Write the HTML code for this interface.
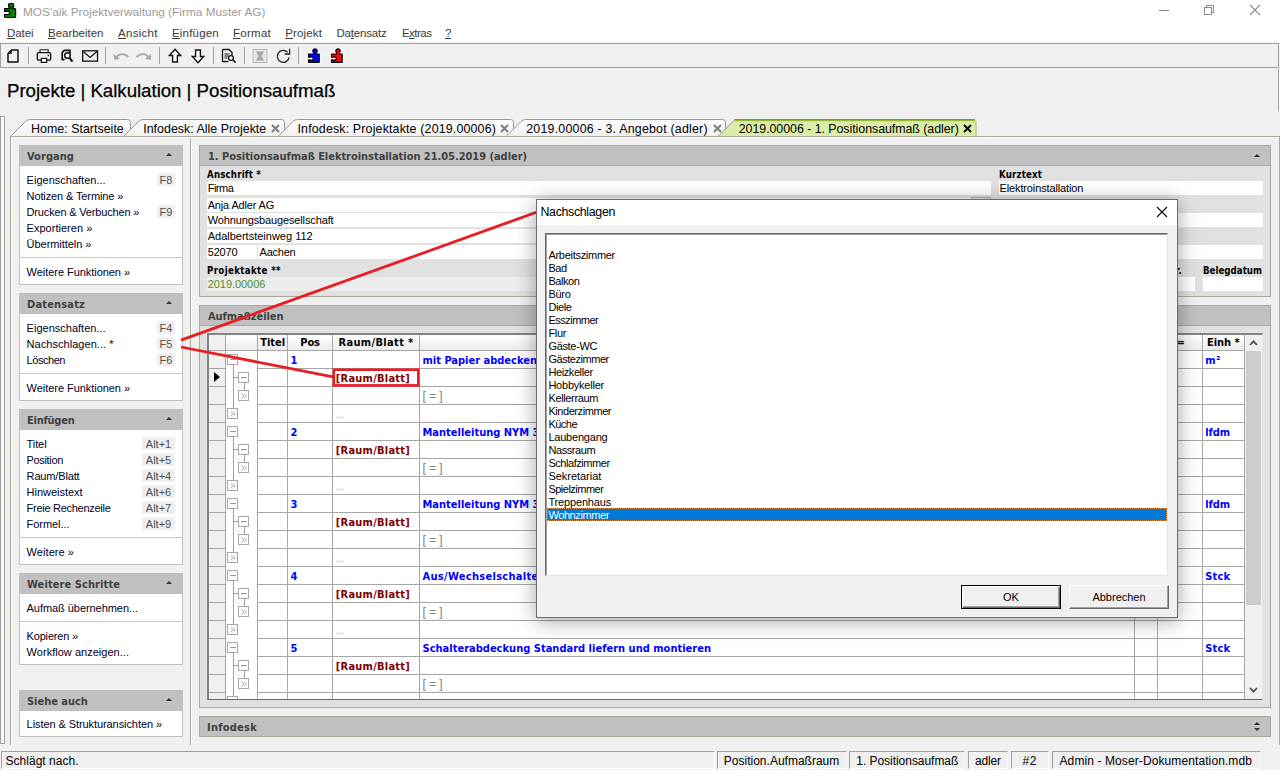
<!DOCTYPE html>
<html lang="de"><head><meta charset="utf-8"><title>MOS'aik Projektverwaltung</title>
<style>
html,body{margin:0;padding:0}
body{width:1280px;height:770px;overflow:hidden;background:#f0f0f0;position:relative;font-family:"Liberation Sans",sans-serif;font-size:11px;color:#000;}
div,span{box-sizing:border-box}
.abs{position:absolute}
.t{position:absolute;white-space:pre;line-height:14px;height:14px}
.ui{position:absolute;white-space:pre;line-height:14px;height:14px;font-family:"Liberation Sans",sans-serif;font-size:11.8px}
.menu{position:absolute;height:14px;line-height:14px;font-size:11.5px;color:#3a3a3a;white-space:pre}
.menu u{text-decoration:underline;text-underline-offset:1px}
.sep{position:absolute;top:47px;width:1px;height:17px;background:#a0a0a0}
.ph{position:absolute;height:21px;background:#c0c0c0}
.pt{position:absolute;height:14px;line-height:14px;color:#404040;font-family:"DejaVu Sans Condensed","Liberation Sans",sans-serif;font-weight:bold;font-size:11px;white-space:pre}
.pb{position:absolute;background:#fff;border:1px solid #c0c0c0;border-top:none}
.arr{position:absolute;width:0;height:0;border-left:3px solid transparent;border-right:3px solid transparent;border-bottom:3px solid #303030}
.li{position:absolute;height:14px;line-height:14px;color:#00001c;white-space:pre}
.key{position:absolute;height:13px;line-height:14px;background:#efefef;color:#505050;text-align:center;white-space:pre}
.hr{position:absolute;left:20px;width:162px;height:1px;background:#c8c8c8}
.fld{position:absolute;height:14px;background:#fff;line-height:14px;white-space:pre;overflow:hidden}
.lbl{position:absolute;height:14px;line-height:14px;white-space:pre;font-size:9.6px;font-family:"DejaVu Sans Condensed","Liberation Sans",sans-serif;font-weight:bold}
.tab{position:absolute;height:14px;line-height:14px;font-size:12.4px;white-space:pre;color:#000}
.gl{position:absolute;background:#a6a6a6}
.gc{position:absolute;height:14px;line-height:14px;white-space:pre;font-family:"DejaVu Sans Condensed","Liberation Sans",sans-serif;font-weight:bold}
.blue{color:#0000ff}
.box{position:absolute;width:11px;height:11px;border:1px solid #a8a8a8;background:#fff}
.lb{position:absolute;height:13px;line-height:13px;white-space:pre}
.sp{position:absolute;top:751px;height:18px;border:1px solid;border-color:#a0a0a0 #fff #fff #a0a0a0}
.st{position:absolute;height:14px;line-height:14px;font-size:12px;white-space:pre}
</style></head>
<body>
<div class="abs" style="left:0;top:0;width:1280px;height:42px;background:#fff"></div>
<svg class="abs" style="left:0px;top:0px" width="20" height="20" viewBox="0 0 20 20"><path d="M4.600 8.600H9.900V7.100H8.600V4.500q0-1 1-1H12.600q1 0 1 1V7.100H12.300V8.600H14.600q1 0 1 1V16.500q0 1-1 1H5.600q-1 0-1-1V14.500H9.400V11.400H4.600V9.600z" fill="#008000" stroke="#000" stroke-width="1.200" stroke-linejoin="round"/></svg>
<div class="ui" style="left:23px;top:5px;letter-spacing:0.023px;color:#9a9a9a">MOS'aik Projektverwaltung (Firma Muster AG)</div>
<div class="abs" style="left:1159px;top:10px;width:10px;height:1px;background:#8a8a8a"></div>
<div class="abs" style="left:1206px;top:5px;width:8px;height:8px;border:1px solid #8a8a8a"></div>
<div class="abs" style="left:1204px;top:7px;width:8px;height:8px;border:1px solid #8a8a8a;background:#fff"></div>
<svg class="abs" style="left:1249px;top:4px" width="12" height="12" viewBox="0 0 12 12"><path d="M1 1L11 11M11 1L1 11" stroke="#8a8a8a" stroke-width="1.100" fill="none"/></svg>
<div class="menu" style="left:7px;top:26px;letter-spacing:-0.052px;"><u>D</u>atei</div>
<div class="menu" style="left:48px;top:26px;letter-spacing:-0.024px;"><u>B</u>earbeiten</div>
<div class="menu" style="left:118px;top:26px;letter-spacing:0.297px;"><u>A</u>nsicht</div>
<div class="menu" style="left:172px;top:26px;letter-spacing:0.187px;"><u>E</u>infügen</div>
<div class="menu" style="left:233px;top:26px;letter-spacing:0.26px;"><u>F</u>ormat</div>
<div class="menu" style="left:285.3px;top:26px;letter-spacing:0.129px;"><u>P</u>rojekt</div>
<div class="menu" style="left:336.4px;top:26px;letter-spacing:-0.177px;">Da<u>t</u>ensatz</div>
<div class="menu" style="left:401.9px;top:26px;letter-spacing:-0.5px;">E<u>x</u>tras</div>
<div class="menu" style="left:445px;top:26px;letter-spacing:-0.5px;"><u>?</u></div>
<div class="abs" style="left:0;top:43px;width:1279px;height:25px;border:1px solid #a0a0a0;background:#f0f0f0"></div>
<div class="sep" style="left:28px"></div>
<div class="sep" style="left:105px"></div>
<div class="sep" style="left:159px"></div>
<div class="sep" style="left:213px"></div>
<div class="sep" style="left:244px"></div>
<div class="sep" style="left:298px"></div>
<svg class="abs" style="left:6px;top:48px" width="14" height="16" viewBox="0 0 14 16"><path d="M5.500 2h6.500v12h-10v-8.500z" fill="none" stroke="#111" stroke-width="1.500" stroke-linejoin="round"/><path d="M2.300 5.800h3.500v-3.500z" fill="#111"/></svg>
<svg class="abs" style="left:36px;top:48px" width="16" height="16" viewBox="0 0 16 16"><path d="M4 4.600V1.700h8.200v2.900" fill="none" stroke="#222" stroke-width="1.100"/><path d="M5 12.200H2.600q-1.300 0-1.300-1.300V6q0-1.300 1.300-1.300h10.800q1.300 0 1.300 1.300v4.900q0 1.300-1.300 1.300H11" fill="none" stroke="#111" stroke-width="1.300"/><rect x="5.300" y="10.400" width="5.400" height="4" fill="#f6f6f6" stroke="#111" stroke-width="1.200"/><rect x="11.600" y="6.700" width="1.500" height="1.500" fill="#111"/></svg>
<svg class="abs" style="left:60px;top:48px" width="14" height="16" viewBox="0 0 14 16"><path d="M10 5.500V2.300H4.300L2.200 4.400V11.600H4.500" fill="none" stroke="#111" stroke-width="1.700" stroke-linejoin="round"/><circle cx="7.500" cy="7.500" r="2.800" fill="#fff" stroke="#111" stroke-width="1.500"/><path d="M9.500 9.800l3 3.800" stroke="#111" stroke-width="2"/></svg>
<svg class="abs" style="left:82px;top:50px" width="17" height="12" viewBox="0 0 17 12"><rect x=".7" y=".8" width="14.800" height="10.300" fill="none" stroke="#111" stroke-width="1.300"/><path d="M1 1.200l7.100 6.200 7.100-6.200" fill="none" stroke="#111" stroke-width="1.200"/></svg>
<svg class="abs" style="left:112px;top:50px" width="18" height="12" viewBox="0 0 18 12"><path d="M3.500 8.500C6 3.500 12 2.500 16.500 7" fill="none" stroke="#a8a8a8" stroke-width="1.800"/><path d="M1.500 4l1 6 5.500-1.200z" fill="#a8a8a8"/></svg>
<svg class="abs" style="left:135px;top:50px" width="18" height="12" viewBox="0 0 18 12"><path d="M14.500 8.500C12 3.500 6 2.500 1.500 7" fill="none" stroke="#a8a8a8" stroke-width="1.800"/><path d="M16.500 4l-1 6-5.500-1.200z" fill="#a8a8a8"/></svg>
<svg class="abs" style="left:168px;top:48px" width="14" height="16" viewBox="0 0 14 16"><path d="M7 1.200l5.600 6.300h-3.200v6.500h-4.800v-6.500h-3.200z" fill="#fff" stroke="#111" stroke-width="1.400" stroke-linejoin="miter"/></svg>
<svg class="abs" style="left:191px;top:48px" width="14" height="16" viewBox="0 0 14 16"><path d="M7 14.800l5.600-6.300h-3.200v-6.500h-4.800v6.500h-3.200z" fill="#fff" stroke="#111" stroke-width="1.400" stroke-linejoin="miter"/></svg>
<svg class="abs" style="left:221px;top:48px" width="16" height="16" viewBox="0 0 16 16"><path d="M1.500 1.500h6.500l3 3v3M1.500 1.500v12h6" fill="none" stroke="#111" stroke-width="1.300"/><path d="M3.500 6h5M3.500 8h4M3.500 10h3" stroke="#111" stroke-width="1"/><circle cx="10" cy="10" r="2.400" fill="#fff" stroke="#111" stroke-width="1.300"/><path d="M11.800 11.800l2.800 2.800" stroke="#111" stroke-width="1.600"/></svg>
<svg class="abs" style="left:252px;top:48px" width="16" height="16" viewBox="0 0 16 16"><rect x="1" y="1.500" width="14" height="13" fill="#e4e4e4" stroke="#b8b8b8" stroke-width="1"/><path d="M4 3.500h8l-2.500 4.500 2.500 4.500h-8l2.500-4.500z" fill="#a8a8a8"/></svg>
<svg class="abs" style="left:275px;top:48px" width="16" height="16" viewBox="0 0 16 16"><path d="M14.200 9.300A6 6 0 1 1 12.600 4.200" fill="none" stroke="#222" stroke-width="1.300"/><path d="M14.600 .8v5.200h-5" fill="none" stroke="#222" stroke-width="1.300"/></svg>
<svg class="abs" style="left:307px;top:48px" width="14" height="16" viewBox="0 0 14 16"><path d="M1.5 6H6.5V4.61A2.2 2.2 0 1 1 9.5 4.61V6H12.2V14.3H1.5V11.97H3.5999999999999996A1.7 1.7 0 1 0 3.5999999999999996 9.23H1.5Z" fill="#fff" stroke="#fff" stroke-width="3" stroke-linejoin="round"/><path d="M1.5 6H6.5V4.61A2.2 2.2 0 1 1 9.5 4.61V6H12.2V14.3H1.5V11.97H3.5999999999999996A1.7 1.7 0 1 0 3.5999999999999996 9.23H1.5Z" fill="#0000ff" stroke="#000" stroke-width="1.2" stroke-linejoin="round"/></svg>
<svg class="abs" style="left:330px;top:48px" width="14" height="16" viewBox="0 0 14 16"><path d="M1.5 6H6.5V4.61A2.2 2.2 0 1 1 9.5 4.61V6H12.2V14.3H1.5V11.97H3.5999999999999996A1.7 1.7 0 1 0 3.5999999999999996 9.23H1.5Z" fill="#fff" stroke="#fff" stroke-width="3" stroke-linejoin="round"/><path d="M1.5 6H6.5V4.61A2.2 2.2 0 1 1 9.5 4.61V6H12.2V14.3H1.5V11.97H3.5999999999999996A1.7 1.7 0 1 0 3.5999999999999996 9.23H1.5Z" fill="#ff0000" stroke="#000" stroke-width="1.2" stroke-linejoin="round"/></svg>
<div class="t" style="left:7px;top:79px;letter-spacing:-0.034px;height:24px;line-height:24px;font-size:18.7px;color:#000;-webkit-text-stroke:.25px #000">Projekte | Kalkulation | Positionsaufmaß</div>
<div class="abs" style="left:1278px;top:69px;width:1px;height:42px;background:#a0a0a0"></div><div class="abs" style="left:1279px;top:69px;width:1px;height:42px;background:#fff"></div>
<div class="abs" style="left:0;top:116px;width:5px;height:628px;background:#fafafa;border:1px solid #a0a0a0"></div>
<div class="abs" style="left:10px;top:136px;width:1270px;height:609px;border-left:1px solid #aca899;border-top:1px solid #aca899;border-right:1px solid #aca899"></div>
<div class="abs" style="left:11px;top:137px;width:1267px;height:608px;border-left:1px solid #fff;border-top:1px solid #fff"></div>
<div class="abs" style="left:190px;top:138px;width:1px;height:607px;background:#aca899"></div><div class="abs" style="left:191px;top:138px;width:1px;height:607px;background:#fff"></div>
<svg class="abs" style="left:0px;top:119px" width="1280" height="19" viewBox="0 0 1280 19"><defs><linearGradient id="tg" x1="0" y1="0" x2="0" y2="1"><stop offset="0" stop-color="#fdfdfd"/><stop offset="1" stop-color="#f1f1f1"/></linearGradient></defs><path d="M11 17L25.3 2.700Q27.5 .5 30 .5H127.5q3 0 3 3V17" fill="url(#tg)" stroke="#989890" stroke-width="1"/><path d="M124 17L138.3 2.700Q140.5 .5 143 .5H281.5q3 0 3 3V17" fill="url(#tg)" stroke="#989890" stroke-width="1"/><path d="M278.5 17L292.8 2.700Q295.0 .5 297.5 .5H510.5q3 0 3 3V17" fill="url(#tg)" stroke="#989890" stroke-width="1"/><path d="M506.5 17L520.8 2.700Q523.0 .5 525.5 .5H722.5q3 0 3 3V17" fill="url(#tg)" stroke="#989890" stroke-width="1"/><path d="M718.5 17L735.0 .5H974.5l2 2V17z" fill="#dcedaa"/><path d="M733.0 2.500L735.0 .5H974.5l2 2z" fill="#b9d95c"/><path d="M734.0 1L735.0 0H974.5l1 1z" fill="#6fa00c"/><path d="M734.5 .8H975.0" stroke="#6fa00c" stroke-width="1.600"/><path d="M718.5 17L734.0 1.500" stroke="#8c8c84" stroke-width=".9" fill="none"/><path d="M976.0 2.500V17" stroke="#a8b890" stroke-width="1" fill="none"/></svg>
<div class="tab" style="left:31px;top:122px;letter-spacing:0.032px;">Home: Startseite</div>
<div class="tab" style="left:143.25px;top:122px;letter-spacing:0.017px;">Infodesk: Alle Projekte</div>
<svg class="abs" style="left:271px;top:124px" width="9" height="9" viewBox="0 0 9 9"><path d="M1 1l7 7M8 1l-7 7" stroke="#808080" stroke-width="2" fill="none"/></svg>
<div class="tab" style="left:297.5px;top:122px;letter-spacing:0.165px;">Infodesk: Projektakte (2019.00006)</div>
<svg class="abs" style="left:500px;top:124px" width="9" height="9" viewBox="0 0 9 9"><path d="M1 1l7 7M8 1l-7 7" stroke="#808080" stroke-width="2" fill="none"/></svg>
<div class="tab" style="left:526.25px;top:122px;letter-spacing:0.212px;">2019.00006 - 3. Angebot (adler)</div>
<svg class="abs" style="left:712.5px;top:124px" width="9" height="9" viewBox="0 0 9 9"><path d="M1 1l7 7M8 1l-7 7" stroke="#808080" stroke-width="2" fill="none"/></svg>
<div class="tab" style="left:738.75px;top:122px;letter-spacing:-0.046px;">2019.00006 - 1. Positionsaufmaß (adler)</div>
<svg class="abs" style="left:963px;top:124px" width="9" height="9" viewBox="0 0 9 9"><path d="M1 1l7 7M8 1l-7 7" stroke="#111" stroke-width="2" fill="none"/></svg>
<div class="ph" style="left:19px;top:145px;width:164px"></div>
<div class="pt" style="left:27px;top:150px;letter-spacing:0.051px;">Vorgang</div>
<div class="arr" style="left:166px;top:153px"></div>
<div class="pb" style="left:19px;top:166px;width:164px;height:119px"></div>
<div class="li" style="left:26.6px;top:173px;letter-spacing:0.007px;">Eigenschaften...</div>
<div class="key" style="left:157px;top:173px;width:18px">F8</div>
<div class="li" style="left:26.6px;top:189px;letter-spacing:-0.119px;">Notizen &amp; Termine »</div>
<div class="li" style="left:26.6px;top:205px;letter-spacing:-0.171px;">Drucken &amp; Verbuchen »</div>
<div class="key" style="left:157px;top:205px;width:18px">F9</div>
<div class="li" style="left:26.6px;top:221px;letter-spacing:0.02px;">Exportieren »</div>
<div class="li" style="left:26.6px;top:237px;letter-spacing:-0.048px;">Übermitteln »</div>
<div class="hr" style="top:257px"></div>
<div class="li" style="left:26.6px;top:265px;letter-spacing:-0.048px;">Weitere Funktionen »</div>
<div class="ph" style="left:19px;top:293px;width:164px"></div>
<div class="pt" style="left:27px;top:298px;letter-spacing:0.172px;">Datensatz</div>
<div class="arr" style="left:166px;top:301px"></div>
<div class="pb" style="left:19px;top:314px;width:164px;height:87px"></div>
<div class="li" style="left:26.6px;top:321px;letter-spacing:0.007px;">Eigenschaften...</div>
<div class="key" style="left:157px;top:321px;width:18px">F4</div>
<div class="li" style="left:26.6px;top:337px;letter-spacing:0.04px;">Nachschlagen... *</div>
<div class="key" style="left:157px;top:337px;width:18px">F5</div>
<div class="li" style="left:26.6px;top:353px;letter-spacing:-0.456px;">Löschen</div>
<div class="key" style="left:157px;top:353px;width:18px">F6</div>
<div class="hr" style="top:373px"></div>
<div class="li" style="left:26.6px;top:381px;letter-spacing:-0.048px;">Weitere Funktionen »</div>
<div class="ph" style="left:19px;top:409px;width:164px"></div>
<div class="pt" style="left:27px;top:414px;letter-spacing:-0.238px;">Einfügen</div>
<div class="arr" style="left:166px;top:417px"></div>
<div class="pb" style="left:19px;top:430px;width:164px;height:135px"></div>
<div class="li" style="left:26.6px;top:437px;letter-spacing:-0.095px;">Titel</div>
<div class="key" style="left:142px;top:437px;width:33px">Alt+1</div>
<div class="li" style="left:26.6px;top:453px;letter-spacing:-0.343px;">Position</div>
<div class="key" style="left:142px;top:453px;width:33px">Alt+5</div>
<div class="li" style="left:26.6px;top:469px;letter-spacing:-0.152px;">Raum/Blatt</div>
<div class="key" style="left:142px;top:469px;width:33px">Alt+4</div>
<div class="li" style="left:26.6px;top:485px;letter-spacing:-0.032px;">Hinweistext</div>
<div class="key" style="left:142px;top:485px;width:33px">Alt+6</div>
<div class="li" style="left:26.6px;top:501px;letter-spacing:-0.28px;">Freie Rechenzeile</div>
<div class="key" style="left:142px;top:501px;width:33px">Alt+7</div>
<div class="li" style="left:26.6px;top:517px;letter-spacing:-0.056px;">Formel...</div>
<div class="key" style="left:142px;top:517px;width:33px">Alt+9</div>
<div class="hr" style="top:537px"></div>
<div class="li" style="left:26.6px;top:545px;letter-spacing:0.058px;">Weitere »</div>
<div class="ph" style="left:19px;top:573px;width:164px"></div>
<div class="pt" style="left:27px;top:578px;letter-spacing:0.087px;">Weitere Schritte</div>
<div class="arr" style="left:166px;top:581px"></div>
<div class="pb" style="left:19px;top:594px;width:164px;height:71px"></div>
<div class="li" style="left:26.6px;top:601px;letter-spacing:-0.056px;">Aufmaß übernehmen...</div>
<div class="hr" style="top:621px"></div>
<div class="li" style="left:26.6px;top:629px;letter-spacing:-0.182px;">Kopieren »</div>
<div class="li" style="left:26.6px;top:645px;letter-spacing:0.025px;">Workflow anzeigen...</div>
<div class="ph" style="left:19px;top:690px;width:164px"></div>
<div class="pt" style="left:27px;top:695px;letter-spacing:-0.028px;">Siehe auch</div>
<div class="arr" style="left:166px;top:698px"></div>
<div class="pb" style="left:19px;top:711px;width:164px;height:26px"></div>
<div class="li" style="left:26.6px;top:717px;letter-spacing:-0.078px;">Listen &amp; Strukturansichten »</div>
<div class="abs" style="left:199px;top:145px;width:1072px;height:152px;background:#e1e1e1;border:1px solid #aca899"></div>
<div class="ph" style="left:200px;top:146px;width:1070px;height:20px;border-bottom:1px solid #aca899"></div>
<div class="pt" style="left:208px;top:150px;letter-spacing:-0.038px;">1. Positionsaufmaß Elektroinstallation 21.05.2019 (adler)</div>
<div class="arr" style="left:1254px;top:154px"></div>
<div class="lbl" style="left:207px;top:168px;letter-spacing:0.196px;">Anschrift *</div>
<div class="fld" style="left:207px;top:181px;width:784px"></div>
<div class="t" style="left:207.7px;top:181px;letter-spacing:-0.5px;">Firma</div>
<div class="fld" style="left:207px;top:198px;width:784px"></div>
<div class="t" style="left:207.7px;top:198px;letter-spacing:-0.154px;">Anja Adler AG</div>
<div class="fld" style="left:207px;top:213px;width:784px"></div>
<div class="t" style="left:207.7px;top:213px;letter-spacing:-0.132px;">Wohnungsbaugesellschaft</div>
<div class="fld" style="left:207px;top:229px;width:784px"></div>
<div class="t" style="left:207.7px;top:229px;letter-spacing:0.001px;">Adalbertsteinweg 112</div>
<div class="fld" style="left:207px;top:245px;width:50px"></div>
<div class="t" style="left:207.7px;top:245px;letter-spacing:-0.179px;">52070</div>
<div class="fld" style="left:258px;top:245px;width:733px"></div>
<div class="t" style="left:259.6px;top:245px;letter-spacing:-0.252px;">Aachen</div>
<div class="abs" style="left:971px;top:197px;width:20px;height:16px;background:#e4e4e4;border:1px solid #b0b0b0"></div>
<div class="lbl" style="left:207px;top:264px;letter-spacing:0.374px;">Projektakte **</div>
<div class="fld" style="left:207px;top:277px;width:784px;background:#ececec"></div>
<div class="t" style="left:207.7px;top:277px;letter-spacing:-0.052px;color:#4f8f1f">2019.00006</div>
<div class="lbl" style="left:999px;top:168px;letter-spacing:0.172px;">Kurztext</div>
<div class="fld" style="left:999px;top:181px;width:264px"></div>
<div class="t" style="left:999.5px;top:181px;letter-spacing:-0.13px;">Elektroinstallation</div>
<div class="fld" style="left:999px;top:213px;width:264px"></div>
<div class="fld" style="left:999px;top:245px;width:264px"></div>
<div class="lbl" style="left:1141px;top:264px;letter-spacing:0.156px;">Belegnr.</div>
<div class="fld" style="left:1100px;top:277px;width:95px"></div>
<div class="lbl" style="left:1203px;top:264px;letter-spacing:0.03px;">Belegdatum</div>
<div class="fld" style="left:1203px;top:277px;width:60px"></div>
<div class="abs" style="left:199px;top:305px;width:1072px;height:403px;background:#e1e1e1;border:1px solid #aca899"></div>
<div class="ph" style="left:200px;top:306px;width:1070px;height:20px;border-bottom:1px solid #aca899"></div>
<div class="pt" style="left:208px;top:310px;letter-spacing:-0.052px;">Aufmaßzeilen</div>
<div class="abs" style="left:207px;top:333px;width:1056px;height:367px;background:#fff;border:2px solid;border-color:#848484 #e8e8e8 #696969 #848484;border-right-width:1px;border-bottom-width:1px"></div>
<div class="abs" style="left:209px;top:335px;width:1035px;height:15px;background:linear-gradient(#fff,#ececec)"></div>
<div class="abs" style="left:209px;top:335px;width:16px;height:364px;background:#f0f0f0"></div>
<div class="gl" style="left:225px;top:335px;width:1px;height:364px"></div>
<div class="gl" style="left:257px;top:335px;width:1px;height:364px"></div>
<div class="gl" style="left:287px;top:335px;width:1px;height:364px"></div>
<div class="gl" style="left:332px;top:335px;width:1px;height:364px"></div>
<div class="gl" style="left:419px;top:335px;width:1px;height:364px"></div>
<div class="gl" style="left:1134px;top:335px;width:1px;height:364px"></div>
<div class="gl" style="left:1157px;top:335px;width:1px;height:364px"></div>
<div class="gl" style="left:1202px;top:335px;width:1px;height:364px"></div>
<div class="gl" style="left:1244px;top:335px;width:1px;height:364px"></div>
<div class="gl" style="left:209px;top:350px;width:16px;height:1px"></div>
<div class="gl" style="left:258px;top:350px;width:986px;height:1px"></div>
<div class="gl" style="left:209px;top:368px;width:16px;height:1px"></div>
<div class="gl" style="left:258px;top:368px;width:986px;height:1px"></div>
<div class="gl" style="left:209px;top:386px;width:16px;height:1px"></div>
<div class="gl" style="left:258px;top:386px;width:986px;height:1px"></div>
<div class="gl" style="left:209px;top:404px;width:16px;height:1px"></div>
<div class="gl" style="left:258px;top:404px;width:986px;height:1px"></div>
<div class="gl" style="left:209px;top:422px;width:16px;height:1px"></div>
<div class="gl" style="left:258px;top:422px;width:986px;height:1px"></div>
<div class="gl" style="left:209px;top:440px;width:16px;height:1px"></div>
<div class="gl" style="left:258px;top:440px;width:986px;height:1px"></div>
<div class="gl" style="left:209px;top:458px;width:16px;height:1px"></div>
<div class="gl" style="left:258px;top:458px;width:986px;height:1px"></div>
<div class="gl" style="left:209px;top:476px;width:16px;height:1px"></div>
<div class="gl" style="left:258px;top:476px;width:986px;height:1px"></div>
<div class="gl" style="left:209px;top:494px;width:16px;height:1px"></div>
<div class="gl" style="left:258px;top:494px;width:986px;height:1px"></div>
<div class="gl" style="left:209px;top:512px;width:16px;height:1px"></div>
<div class="gl" style="left:258px;top:512px;width:986px;height:1px"></div>
<div class="gl" style="left:209px;top:530px;width:16px;height:1px"></div>
<div class="gl" style="left:258px;top:530px;width:986px;height:1px"></div>
<div class="gl" style="left:209px;top:548px;width:16px;height:1px"></div>
<div class="gl" style="left:258px;top:548px;width:986px;height:1px"></div>
<div class="gl" style="left:209px;top:566px;width:16px;height:1px"></div>
<div class="gl" style="left:258px;top:566px;width:986px;height:1px"></div>
<div class="gl" style="left:209px;top:584px;width:16px;height:1px"></div>
<div class="gl" style="left:258px;top:584px;width:986px;height:1px"></div>
<div class="gl" style="left:209px;top:602px;width:16px;height:1px"></div>
<div class="gl" style="left:258px;top:602px;width:986px;height:1px"></div>
<div class="gl" style="left:209px;top:620px;width:16px;height:1px"></div>
<div class="gl" style="left:258px;top:620px;width:986px;height:1px"></div>
<div class="gl" style="left:209px;top:638px;width:16px;height:1px"></div>
<div class="gl" style="left:258px;top:638px;width:986px;height:1px"></div>
<div class="gl" style="left:209px;top:656px;width:16px;height:1px"></div>
<div class="gl" style="left:258px;top:656px;width:986px;height:1px"></div>
<div class="gl" style="left:209px;top:674px;width:16px;height:1px"></div>
<div class="gl" style="left:258px;top:674px;width:986px;height:1px"></div>
<div class="gl" style="left:209px;top:692px;width:16px;height:1px"></div>
<div class="gl" style="left:258px;top:692px;width:986px;height:1px"></div>
<div class="gl" style="left:226px;top:350px;width:32px;height:1px"></div>
<div class="gc" style="left:260.3px;top:336px;letter-spacing:-0.037px;">Titel</div>
<div class="gc" style="left:300.3px;top:336px;letter-spacing:-0.151px;">Pos</div>
<div class="gc" style="left:338.5px;top:336px;letter-spacing:0.336px;">Raum/Blatt *</div>
<div class="gc" style="left:1176.5px;top:336px;">=</div>
<div class="gc" style="left:1207px;top:336px;letter-spacing:-0.029px;">Einh *</div>
<div class="abs" style="left:233px;top:365px;width:1px;height:43px;background:#a0a0a0"></div>
<div class="abs" style="left:233px;top:377px;width:6px;height:1px;background:#a0a0a0"></div>
<div class="abs" style="left:244px;top:383px;width:1px;height:8px;background:#a0a0a0"></div>
<div class="box" style="left:227px;top:354px"><div class="abs" style="left:2px;top:4px;width:6px;height:1px;background:#9a9a9a"></div></div>
<div class="box" style="left:238px;top:372px"><div class="abs" style="left:2px;top:4px;width:6px;height:1px;background:#9a9a9a"></div></div>
<div class="box" style="left:238px;top:390px"><svg class="abs" style="left:2px;top:2px" width="6" height="6" viewBox="0 0 6 6"><path d="M.5 .6L2.800 3 .5 5.400M3 .6L5.300 3 3 5.400" fill="none" stroke="#9aa0b0" stroke-width=".9"/></svg></div>
<div class="box" style="left:227px;top:408px"><svg class="abs" style="left:2px;top:2px" width="6" height="6" viewBox="0 0 6 6"><path d="M.5 .6L2.800 3 .5 5.400M3 .6L5.300 3 3 5.400" fill="none" stroke="#9aa0b0" stroke-width=".9"/></svg></div>
<div class="gc blue" style="left:290.5px;top:354px;">1</div>
<div class="gc blue" style="left:422.5px;top:354px;">mit Papier abdecken</div>
<div class="gc blue" style="left:1205.3px;top:354px;letter-spacing:0.5px;">m²</div>
<div class="gc" style="left:335.8px;top:372px;letter-spacing:0.234px;color:#800000">[Raum/Blatt]</div>
<div class="t" style="left:422.5px;top:389px;letter-spacing:-0.069px;color:#808080;font-size:12px">[ = ]</div>
<div class="t" style="left:335.5px;top:408px;color:#909090;font-size:9px">…</div>
<div class="abs" style="left:233px;top:437px;width:1px;height:43px;background:#a0a0a0"></div>
<div class="abs" style="left:233px;top:449px;width:6px;height:1px;background:#a0a0a0"></div>
<div class="abs" style="left:244px;top:455px;width:1px;height:8px;background:#a0a0a0"></div>
<div class="box" style="left:227px;top:426px"><div class="abs" style="left:2px;top:4px;width:6px;height:1px;background:#9a9a9a"></div></div>
<div class="box" style="left:238px;top:444px"><div class="abs" style="left:2px;top:4px;width:6px;height:1px;background:#9a9a9a"></div></div>
<div class="box" style="left:238px;top:462px"><svg class="abs" style="left:2px;top:2px" width="6" height="6" viewBox="0 0 6 6"><path d="M.5 .6L2.800 3 .5 5.400M3 .6L5.300 3 3 5.400" fill="none" stroke="#9aa0b0" stroke-width=".9"/></svg></div>
<div class="box" style="left:227px;top:480px"><svg class="abs" style="left:2px;top:2px" width="6" height="6" viewBox="0 0 6 6"><path d="M.5 .6L2.800 3 .5 5.400M3 .6L5.300 3 3 5.400" fill="none" stroke="#9aa0b0" stroke-width=".9"/></svg></div>
<div class="gc blue" style="left:290.5px;top:426px;">2</div>
<div class="gc blue" style="left:422.5px;top:426px;">Mantelleitung NYM 3x1,5 qmm liefern und verlegen</div>
<div class="gc blue" style="left:1205.3px;top:426px;letter-spacing:-0.148px;">lfdm</div>
<div class="gc" style="left:335.8px;top:444px;letter-spacing:0.234px;color:#800000">[Raum/Blatt]</div>
<div class="t" style="left:422.5px;top:461px;letter-spacing:-0.069px;color:#808080;font-size:12px">[ = ]</div>
<div class="t" style="left:335.5px;top:480px;color:#909090;font-size:9px">…</div>
<div class="abs" style="left:233px;top:509px;width:1px;height:43px;background:#a0a0a0"></div>
<div class="abs" style="left:233px;top:521px;width:6px;height:1px;background:#a0a0a0"></div>
<div class="abs" style="left:244px;top:527px;width:1px;height:8px;background:#a0a0a0"></div>
<div class="box" style="left:227px;top:498px"><div class="abs" style="left:2px;top:4px;width:6px;height:1px;background:#9a9a9a"></div></div>
<div class="box" style="left:238px;top:516px"><div class="abs" style="left:2px;top:4px;width:6px;height:1px;background:#9a9a9a"></div></div>
<div class="box" style="left:238px;top:534px"><svg class="abs" style="left:2px;top:2px" width="6" height="6" viewBox="0 0 6 6"><path d="M.5 .6L2.800 3 .5 5.400M3 .6L5.300 3 3 5.400" fill="none" stroke="#9aa0b0" stroke-width=".9"/></svg></div>
<div class="box" style="left:227px;top:552px"><svg class="abs" style="left:2px;top:2px" width="6" height="6" viewBox="0 0 6 6"><path d="M.5 .6L2.800 3 .5 5.400M3 .6L5.300 3 3 5.400" fill="none" stroke="#9aa0b0" stroke-width=".9"/></svg></div>
<div class="gc blue" style="left:290.5px;top:498px;">3</div>
<div class="gc blue" style="left:422.5px;top:498px;">Mantelleitung NYM 3x2,5 qmm liefern und verlegen</div>
<div class="gc blue" style="left:1205.3px;top:498px;letter-spacing:-0.148px;">lfdm</div>
<div class="gc" style="left:335.8px;top:516px;letter-spacing:0.234px;color:#800000">[Raum/Blatt]</div>
<div class="t" style="left:422.5px;top:533px;letter-spacing:-0.069px;color:#808080;font-size:12px">[ = ]</div>
<div class="t" style="left:335.5px;top:552px;color:#909090;font-size:9px">…</div>
<div class="abs" style="left:233px;top:581px;width:1px;height:43px;background:#a0a0a0"></div>
<div class="abs" style="left:233px;top:593px;width:6px;height:1px;background:#a0a0a0"></div>
<div class="abs" style="left:244px;top:599px;width:1px;height:8px;background:#a0a0a0"></div>
<div class="box" style="left:227px;top:570px"><div class="abs" style="left:2px;top:4px;width:6px;height:1px;background:#9a9a9a"></div></div>
<div class="box" style="left:238px;top:588px"><div class="abs" style="left:2px;top:4px;width:6px;height:1px;background:#9a9a9a"></div></div>
<div class="box" style="left:238px;top:606px"><svg class="abs" style="left:2px;top:2px" width="6" height="6" viewBox="0 0 6 6"><path d="M.5 .6L2.800 3 .5 5.400M3 .6L5.300 3 3 5.400" fill="none" stroke="#9aa0b0" stroke-width=".9"/></svg></div>
<div class="box" style="left:227px;top:624px"><svg class="abs" style="left:2px;top:2px" width="6" height="6" viewBox="0 0 6 6"><path d="M.5 .6L2.800 3 .5 5.400M3 .6L5.300 3 3 5.400" fill="none" stroke="#9aa0b0" stroke-width=".9"/></svg></div>
<div class="gc blue" style="left:290.5px;top:570px;">4</div>
<div class="gc blue" style="left:422.5px;top:570px;letter-spacing:.3px">Aus/Wechselschalter liefern und montieren</div>
<div class="gc blue" style="left:1205.3px;top:570px;letter-spacing:0.122px;">Stck</div>
<div class="gc" style="left:335.8px;top:588px;letter-spacing:0.234px;color:#800000">[Raum/Blatt]</div>
<div class="t" style="left:422.5px;top:605px;letter-spacing:-0.069px;color:#808080;font-size:12px">[ = ]</div>
<div class="t" style="left:335.5px;top:624px;color:#909090;font-size:9px">…</div>
<div class="abs" style="left:233px;top:653px;width:1px;height:43px;background:#a0a0a0"></div>
<div class="abs" style="left:233px;top:665px;width:6px;height:1px;background:#a0a0a0"></div>
<div class="abs" style="left:244px;top:671px;width:1px;height:8px;background:#a0a0a0"></div>
<div class="box" style="left:227px;top:642px"><div class="abs" style="left:2px;top:4px;width:6px;height:1px;background:#9a9a9a"></div></div>
<div class="box" style="left:238px;top:660px"><div class="abs" style="left:2px;top:4px;width:6px;height:1px;background:#9a9a9a"></div></div>
<div class="box" style="left:238px;top:678px"><svg class="abs" style="left:2px;top:2px" width="6" height="6" viewBox="0 0 6 6"><path d="M.5 .6L2.800 3 .5 5.400M3 .6L5.300 3 3 5.400" fill="none" stroke="#9aa0b0" stroke-width=".9"/></svg></div>
<div class="box" style="left:227px;top:696px;height:3px;border-bottom:none"></div>
<div class="gc blue" style="left:290.5px;top:642px;">5</div>
<div class="gc blue" style="left:422.5px;top:642px;letter-spacing:0.011px;">Schalterabdeckung Standard liefern und montieren</div>
<div class="gc blue" style="left:1205.3px;top:642px;letter-spacing:0.122px;">Stck</div>
<div class="gc" style="left:335.8px;top:660px;letter-spacing:0.234px;color:#800000">[Raum/Blatt]</div>
<div class="t" style="left:422.5px;top:677px;letter-spacing:-0.069px;color:#808080;font-size:12px">[ = ]</div>
<div class="abs" style="left:214px;top:372px;width:0;height:0;border-top:5.500px solid transparent;border-bottom:5.500px solid transparent;border-left:6px solid #000"></div>
<div class="abs" style="left:1245px;top:335px;width:17px;height:364px;background:#f0f0f0"></div>
<div class="abs" style="left:1246px;top:351px;width:15px;height:254px;background:#cdcdcd"></div>
<svg class="abs" style="left:1249px;top:339px" width="9" height="7" viewBox="0 0 9 7"><path d="M1 6l3.500-3.700 3.500 3.700" fill="none" stroke="#505050" stroke-width="1.800"/></svg>
<svg class="abs" style="left:1249px;top:687px" width="9" height="7" viewBox="0 0 9 7"><path d="M1 1l3.500 3.700 3.500-3.700" fill="none" stroke="#505050" stroke-width="1.800"/></svg>
<div class="abs" style="left:199px;top:716px;width:1072px;height:21px;background:#c0c0c0;border:1px solid #aca899"></div>
<div class="pt" style="left:207px;top:721px;letter-spacing:0.236px;">Infodesk</div>
<div class="abs" style="left:1254px;top:722px;width:0;height:0;border-left:3px solid transparent;border-right:3px solid transparent;border-bottom:3px solid #303030"></div>
<div class="abs" style="left:1254px;top:728px;width:0;height:0;border-left:3px solid transparent;border-right:3px solid transparent;border-top:3px solid #303030"></div>
<svg class="abs" style="left:0;top:0;pointer-events:none" width="1280" height="770" viewBox="0 0 1280 770"><path d="M181 340.100L536.500 212.300M181 347L333 376.900" stroke="#ea1c24" stroke-width="2.800" fill="none"/><rect x="333.800" y="369.700" width="84.500" height="15.700" fill="none" stroke="#ea1c24" stroke-width="2.600"/></svg>
<div class="abs" style="left:536px;top:199px;width:642px;height:419px;background:#f0f0f0;border:1px solid #6e6e6e;box-shadow:0 3px 20px rgba(0,0,0,.36)"></div>
<div class="abs" style="left:537px;top:200px;width:640px;height:25px;background:#fff"></div>
<div class="ui" style="left:540.5px;top:205px;letter-spacing:-0.336px;font-size:12.4px">Nachschlagen</div>
<svg class="abs" style="left:1156px;top:206px" width="12" height="12" viewBox="0 0 12 12"><path d="M1 1L11 11M11 1L1 11" stroke="#111" stroke-width="1.200" fill="none"/></svg>
<div class="abs" style="left:545px;top:233px;width:623px;height:343px;background:#fff;border:1px solid;border-color:#696969 #e3e3e3 #e3e3e3 #696969;box-shadow:inset 1px 1px 0 #a0a0a0"></div>
<div class="lb" style="left:548.4px;top:249px;letter-spacing:-0.284px;">Arbeitszimmer</div>
<div class="lb" style="left:548.4px;top:262px;letter-spacing:-0.459px;">Bad</div>
<div class="lb" style="left:548.4px;top:275px;letter-spacing:-0.44px;">Balkon</div>
<div class="lb" style="left:548.4px;top:288px;letter-spacing:-0.287px;">Büro</div>
<div class="lb" style="left:548.4px;top:301px;letter-spacing:-0.416px;">Diele</div>
<div class="lb" style="left:548.4px;top:314px;letter-spacing:-0.5px;">Esszimmer</div>
<div class="lb" style="left:548.4px;top:327px;letter-spacing:-0.338px;">Flur</div>
<div class="lb" style="left:548.4px;top:340px;letter-spacing:-0.318px;">Gäste-WC</div>
<div class="lb" style="left:548.4px;top:353px;letter-spacing:-0.455px;">Gästezimmer</div>
<div class="lb" style="left:548.4px;top:366px;letter-spacing:-0.4px;">Heizkeller</div>
<div class="lb" style="left:548.4px;top:379px;letter-spacing:-0.227px;">Hobbykeller</div>
<div class="lb" style="left:548.4px;top:392px;letter-spacing:-0.349px;">Kellerraum</div>
<div class="lb" style="left:548.4px;top:405px;letter-spacing:-0.43px;">Kinderzimmer</div>
<div class="lb" style="left:548.4px;top:418px;letter-spacing:-0.5px;">Küche</div>
<div class="lb" style="left:548.4px;top:431px;letter-spacing:-0.209px;">Laubengang</div>
<div class="lb" style="left:548.4px;top:444px;letter-spacing:-0.403px;">Nassraum</div>
<div class="lb" style="left:548.4px;top:457px;letter-spacing:-0.452px;">Schlafzimmer</div>
<div class="lb" style="left:548.4px;top:470px;letter-spacing:-0.028px;">Sekretariat</div>
<div class="lb" style="left:548.4px;top:483px;letter-spacing:-0.5px;">Spielzimmer</div>
<div class="lb" style="left:548.4px;top:496px;letter-spacing:-0.157px;">Treppenhaus</div>
<div class="abs" style="left:547px;top:508px;width:620px;height:13px;background:#0078d7;outline:1px dotted #e09040;outline-offset:-1px"></div>
<div class="lb" style="left:548.4px;top:509px;letter-spacing:-0.399px;color:#fff">Wohnzimmer</div>
<div class="abs" style="left:961px;top:585px;width:100px;height:24px;background:#f0f0f0;border:1px solid #000;box-shadow:inset 1px 1px 0 #fff,inset -1px -1px 0 #696969,inset -2px -2px 0 #a0a0a0;text-align:center;line-height:22px">OK</div>
<div class="abs" style="left:1069px;top:585px;width:100px;height:24px;background:#f0f0f0;border:1px solid;border-color:#fff #696969 #696969 #fff;box-shadow:inset -1px -1px 0 #a0a0a0;text-align:center;line-height:22px">Abbrechen</div>
<div class="abs" style="left:0;top:750px;width:1280px;height:20px;background:#f0f0f0"></div>
<div class="sp" style="left:1px;width:714px"></div>
<div class="sp" style="left:717px;width:130px"></div>
<div class="sp" style="left:849px;width:116px"></div>
<div class="sp" style="left:968px;width:40px"></div>
<div class="sp" style="left:1011px;width:38px"></div>
<div class="sp" style="left:1052px;width:209px"></div>
<div class="st" style="left:5.5px;top:754px;letter-spacing:0.022px;">Schlägt nach.</div>
<div class="st" style="left:723.8px;top:754px;letter-spacing:0.006px;">Position.Aufmaßraum</div>
<div class="st" style="left:856.3px;top:754px;letter-spacing:-0.04px;">1. Positionsaufmaß</div>
<div class="st" style="left:975px;top:754px;letter-spacing:-0.188px;">adler</div>
<div class="st" style="left:1022.5px;top:754px;letter-spacing:0.5px;">#2</div>
<div class="st" style="left:1059.5px;top:754px;letter-spacing:0.1px;">Admin - Moser-Dokumentation.mdb</div>
</body></html>
